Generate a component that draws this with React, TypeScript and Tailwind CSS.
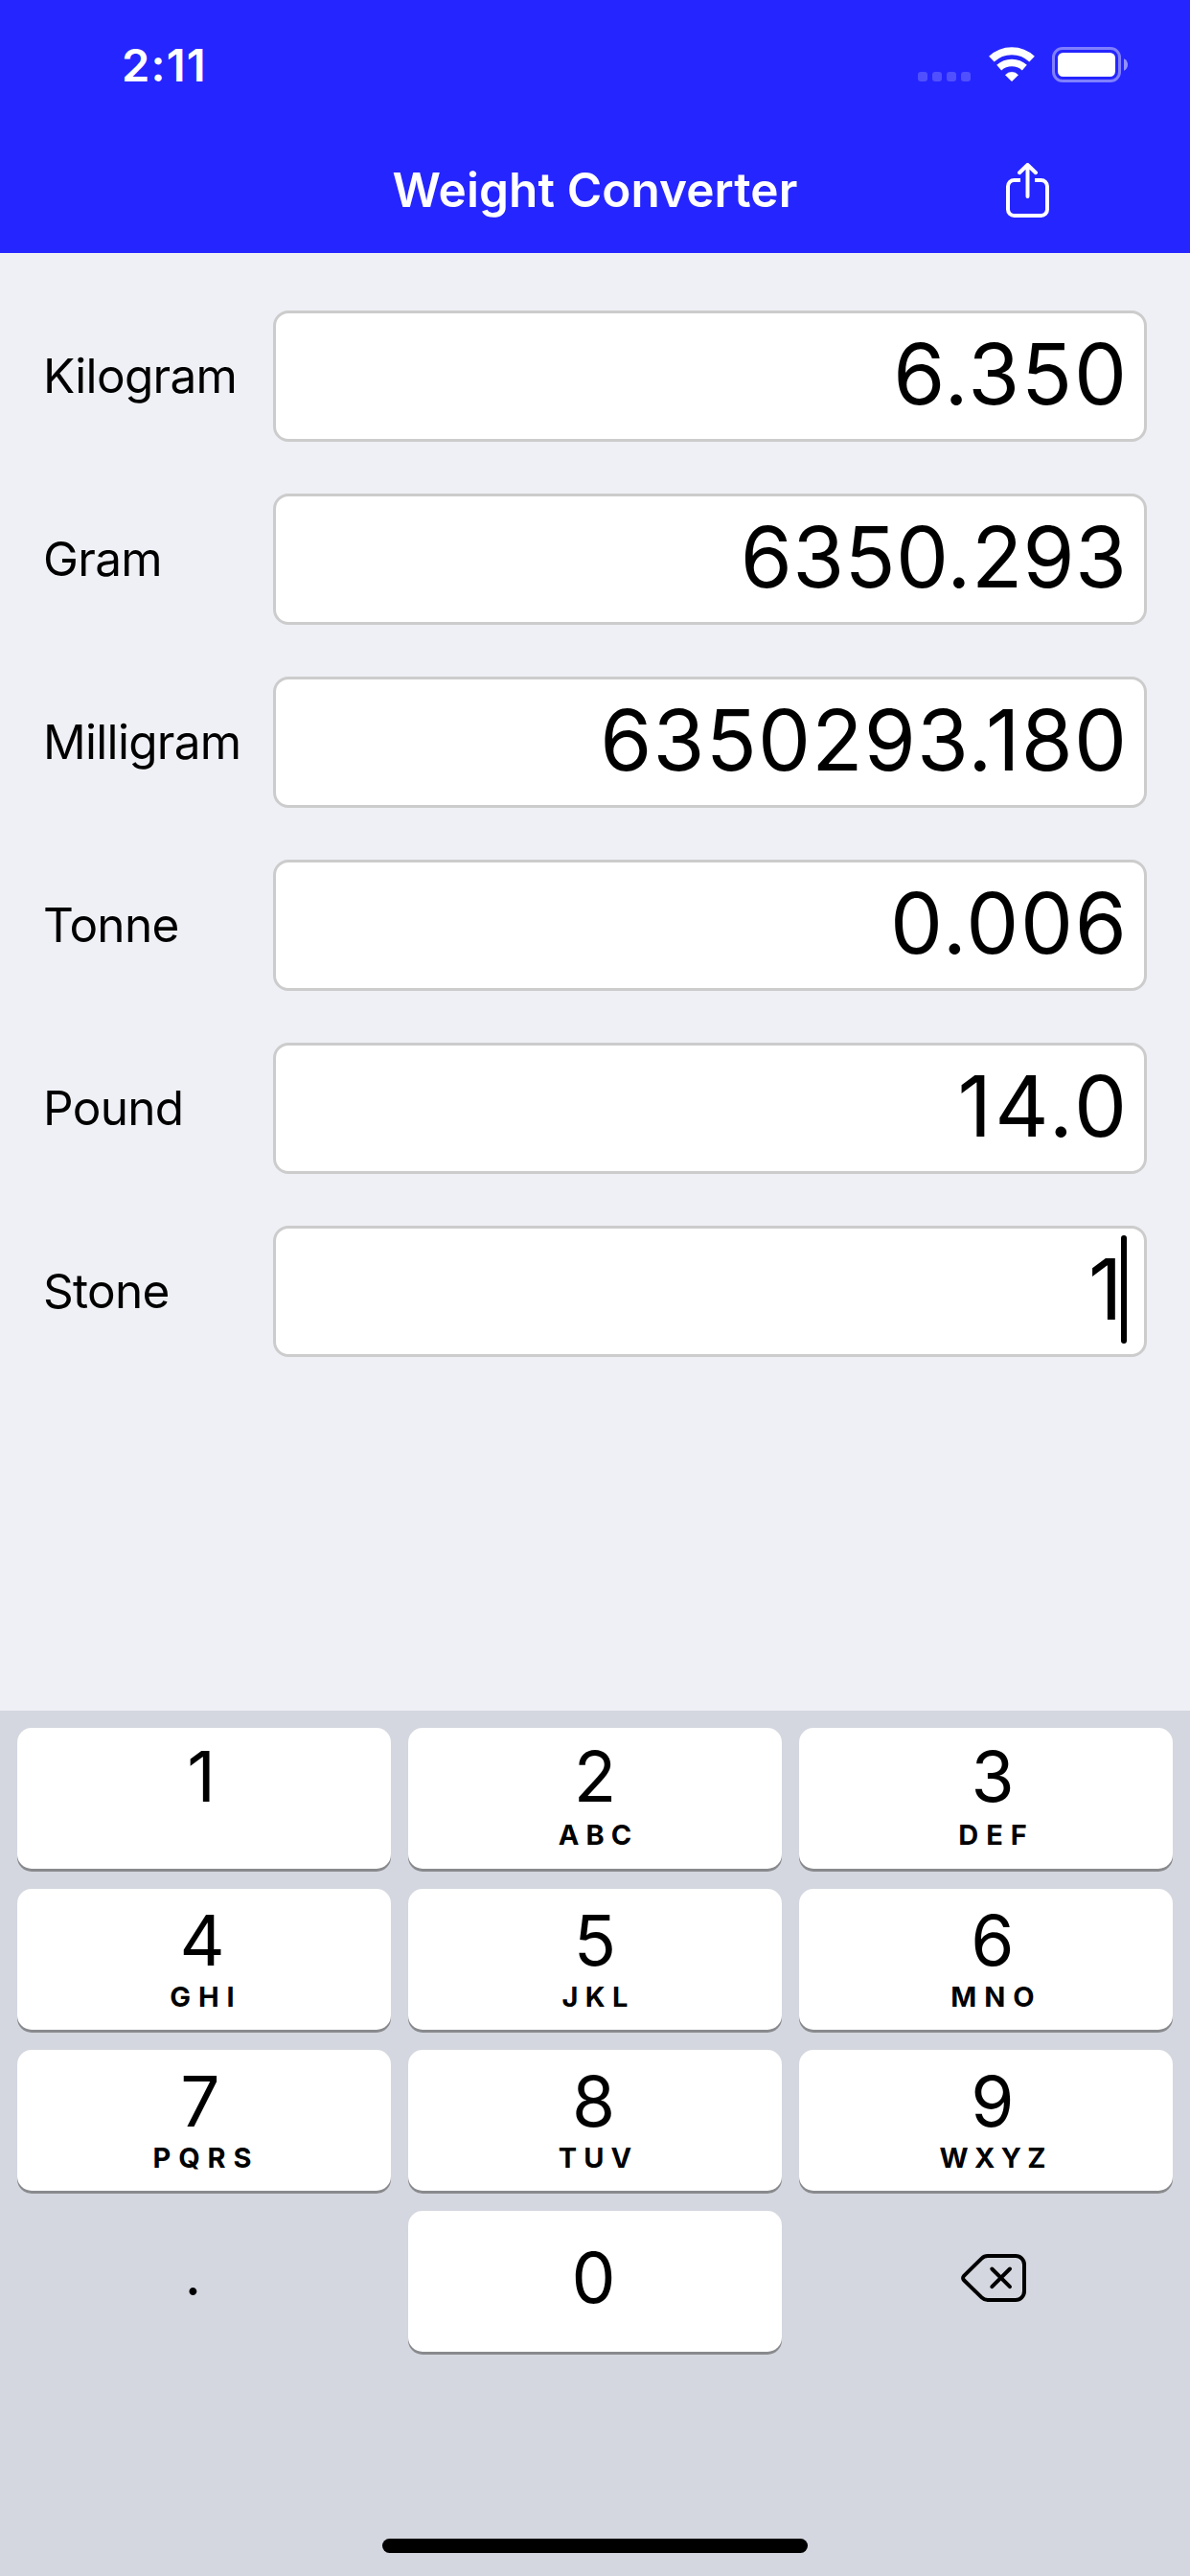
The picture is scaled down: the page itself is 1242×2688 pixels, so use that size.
import React from 'react';

type Unit = {
  label: string;
  value: string;
  tracking: string;
  active?: boolean;
};

type Key = {
  digit: string;
  letters?: string;
  tracking?: string;
  nudge?: string;
};

const units: Unit[] = [
  { label: 'Kilogram', value: '6.350', tracking: 'tracking-[1.9px] -mr-[1.9px]' },
  { label: 'Gram', value: '6350.293', tracking: 'tracking-[0.4px] -mr-[0.4px]' },
  { label: 'Milligram', value: '6350293.180', tracking: 'tracking-[1.2px] -mr-[1.2px]' },
  { label: 'Tonne', value: '0.006', tracking: 'tracking-[1.7px] -mr-[1.7px]' },
  { label: 'Pound', value: '14.0', tracking: 'tracking-[3.2px] -mr-[3.2px]' },
  { label: 'Stone', value: '1', tracking: '-mr-[1.5px]', active: true },
];

const keyRows: Key[][] = [
  [
    { digit: '1', nudge: 'pr-[2px]' },
    { digit: '2', letters: 'ABC', tracking: 'tracking-[7px] -mr-[7px]' },
    { digit: '3', letters: 'DEF' },
  ],
  [
    { digit: '4', letters: 'GHI' },
    { digit: '5', letters: 'JKL', tracking: 'tracking-[7.3px] -mr-[7.3px]' },
    { digit: '6', letters: 'MNO' },
  ],
  [
    { digit: '7', letters: 'PQRS', nudge: 'pr-[4px]' },
    { digit: '8', letters: 'TUV', tracking: 'tracking-[7.1px] -mr-[7.1px]', nudge: 'pr-[3px]' },
    { digit: '9', letters: 'WXYZ', tracking: 'tracking-[6.4px] -mr-[6.4px]' },
  ],
];

const columnPadding = ['pr-[4px]', '', 'pl-[14px]'];

const keyCap = 'h-[147px] rounded-[15px] bg-white shadow-[0_3px_0_#898a8d]';

function StatusBar() {
  return (
    <div className="flex h-[132px] items-center justify-between pt-[3px] pl-[127px] pr-[64px]">
      <span className="text-[47px] leading-none font-semibold tracking-[1.2px]">2:11</span>
      <div className="flex items-center gap-[18.5px]">
        {/* No cellular signal */}
        <svg width="55" height="37" viewBox="0 0 55 37" fill="#fff" fillOpacity="0.2" aria-hidden="true">
          <rect x="0" y="26" width="10" height="10" rx="3" />
          <rect x="15" y="26" width="10" height="10" rx="3" />
          <rect x="30" y="26" width="10" height="10" rx="3" />
          <rect x="45" y="26" width="10" height="10" rx="3" />
        </svg>
        {/* Wi-Fi */}
        <svg width="48" height="37" viewBox="0 0 48 37" fill="none" stroke="#fff" aria-hidden="true">
          <path d="M2.9 12.7A30.5 30.5 0 0 1 45.1 12.7" strokeWidth="8" />
          <path d="M10.7 21.6A20 20 0 0 1 37.3 21.6" strokeWidth="7.5" />
          <path d="M24 35.8L17.4 29.2A9 9 0 0 1 30.6 29.2Z" fill="#fff" strokeWidth="0.6" strokeLinejoin="round" />
        </svg>
        {/* Battery */}
        <svg width="80" height="37" viewBox="0 0 80 37" fill="none" aria-hidden="true">
          <rect x="1.5" y="1.5" width="69" height="34" rx="9.5" stroke="#fff" strokeOpacity="0.42" strokeWidth="3" />
          <rect x="6" y="6" width="60" height="25" rx="5.5" fill="#fff" />
          <path d="M75 12.2C77.6 13.3 79 15.7 79 18.5S77.6 23.7 75 24.8Z" fill="#fff" fillOpacity="0.5" />
        </svg>
      </div>
    </div>
  );
}

function NavBar() {
  return (
    <div className="grid h-[132px] grid-cols-[1fr_auto_1fr] items-center">
      <h1 className="col-start-2 pt-[1px] text-[49.5px] leading-none font-[570] tracking-[0.1px] whitespace-nowrap">Weight Converter</h1>
      <button className="mr-[147px] justify-self-end" aria-label="Share">
        <svg width="45" height="57" viewBox="0 0 45 57" fill="none" stroke="#fff" strokeWidth="4" strokeLinejoin="round">
          <path d="M15 18H8.5A6.5 6.5 0 0 0 2 24.5V48.5A6.5 6.5 0 0 0 8.5 55H36.5A6.5 6.5 0 0 0 43 48.5V24.5A6.5 6.5 0 0 0 36.5 18H30" />
          <path d="M22.5 35V3M14 10.2L22.5 2L31 10.2" strokeLinecap="round" />
        </svg>
      </button>
    </div>
  );
}

function UnitRow({ unit }: { unit: Unit }) {
  return (
    <div className="flex items-center">
      <span className="w-[240px] pt-[1px] text-[49.5px] leading-none tracking-[-0.7px]">{unit.label}</span>
      <div className="flex h-[137px] w-[912px] items-center justify-end rounded-[16px] border-[3px] border-[#cccccc] bg-white pr-[18px]">
        <span className={`pb-[3px] text-[87.3px] leading-none ${unit.tracking}`}>{unit.value}</span>
        {unit.active && <span className="mb-[5px] h-[113px] w-[6px] rounded-full bg-black" />}
      </div>
    </div>
  );
}

function KeyPad() {
  return (
    <div className="flex h-[903px] flex-col items-center justify-between bg-[#d4d7df] px-[18px] pt-[18px] pb-[24px]">
      <div className="grid w-full grid-cols-3 gap-x-[18px] gap-y-[21px]">
        {keyRows.map((row, rowIndex) =>
          row.map((key, col) => (
            <button
              key={key.digit}
              className={`${keyCap} ${columnPadding[col]} ${rowIndex === 0 ? 'pt-[14px]' : 'pt-[17px]'} flex flex-col items-center`}
            >
              <span className={`text-[73px] leading-[73px] ${key.nudge ?? ''}`}>{key.digit}</span>
              {key.letters && (
                <span
                  className={`text-[29px] leading-[29px] font-[670] ${rowIndex === 0 ? 'mt-[10px]' : 'mt-[8px]'} ${key.tracking ?? 'tracking-[7.9px] -mr-[7.9px]'}`}
                >
                  {key.letters}
                </span>
              )}
            </button>
          ))
        )}
        <button className="flex h-[147px] flex-col items-center pt-[36px] pr-[23px] text-[60px] leading-[60px]">.</button>
        <button className={`${keyCap} flex flex-col items-center pt-[33px] pr-[3px] text-[73px] leading-[73px]`}>0</button>
        <button className="flex h-[147px] items-center justify-center pb-[7px] pl-[16px]" aria-label="Delete">
          <svg width="68" height="50" viewBox="0 0 68 50" fill="none" stroke="#000" strokeWidth="4" strokeLinecap="round">
            <path d="M28 2H57A9 9 0 0 1 66 11V39A9 9 0 0 1 57 48H28A9 9 0 0 1 21.6 45.4L3 27.2A3.1 3.1 0 0 1 3 22.8L21.6 4.6A9 9 0 0 1 28 2Z" />
            <path d="M32.3 15.5L51 34.2M51 15.5L32.3 34.2" />
          </svg>
        </button>
      </div>
      {/* Home indicator */}
      <div className="h-[15px] w-[444px] rounded-full bg-black" />
    </div>
  );
}

export default function App() {
  return (
    <div className="flex h-[2688px] w-[1242px] flex-col bg-[#eff0f5] font-['Inter',sans-serif] text-black">
      <header className="bg-[#2525ff] text-white">
        <StatusBar />
        <NavBar />
      </header>
      <main className="flex flex-1 flex-col gap-[54px] pt-[60px] pl-[45px]">
        {units.map((unit) => (
          <UnitRow key={unit.label} unit={unit} />
        ))}
      </main>
      <KeyPad />
    </div>
  );
}
